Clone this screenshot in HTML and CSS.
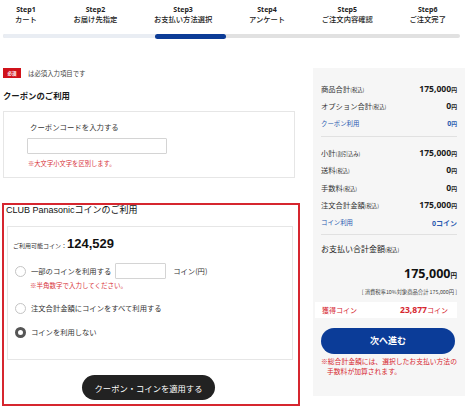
FILE: index.html
```html
<!DOCTYPE html>
<html lang="ja">
<head>
<meta charset="utf-8">
<title>お支払い方法選択</title>
<link rel="stylesheet" href="styles.css">
</head>
<body>
<header class="steps">
  <ol class="step-list">
    <li class="step"><span class="step-no">Step1</span><span class="step-name">カート</span></li>
    <li class="step"><span class="step-no">Step2</span><span class="step-name">お届け先指定</span></li>
    <li class="step"><span class="step-no">Step3</span><span class="step-name">お支払い方法選択</span></li>
    <li class="step"><span class="step-no">Step4</span><span class="step-name">アンケート</span></li>
    <li class="step"><span class="step-no">Step5</span><span class="step-name">ご注文内容確認</span></li>
    <li class="step"><span class="step-no">Step6</span><span class="step-name">ご注文完了</span></li>
  </ol>
  <div class="progress"><span class="progress-done"></span><span class="progress-current"></span></div>
</header>

<main class="checkout">
  <section class="options">
    <p class="required-note"><span class="badge">必須</span>は必須入力項目です</p>

    <h2 class="section-title">クーポンのご利用</h2>
    <div class="box coupon-box">
      <label class="field-label" for="coupon">クーポンコードを入力する</label>
      <input class="text-input coupon-input" id="coupon" type="text">
      <p class="hint">※大文字小文字を区別します。</p>
    </div>

    <div class="coin-section">
      <h2 class="coin-title">CLUB Panasonicコインのご利用</h2>
      <div class="box coin-box">
        <p class="coin-available">ご利用可能コイン：<strong class="coin-amount">124,529</strong></p>
        <div class="radio-row">
          <span class="radio"></span>
          <span>一部のコインを利用する</span>
          <input class="text-input coin-input" type="text">
          <span>コイン(円)</span>
        </div>
        <p class="hint coin-hint">※半角数字で入力してください。</p>
        <div class="radio-row row-all">
          <span class="radio"></span>
          <span>注文合計金額にコインをすべて利用する</span>
        </div>
        <div class="radio-row row-none">
          <span class="radio is-checked"></span>
          <span>コインを利用しない</span>
        </div>
      </div>
      <div class="apply-wrap">
        <button class="btn-apply" type="button">クーポン・コインを適用する</button>
      </div>
    </div>
  </section>

  <aside class="summary">
    <div class="sum-group">
      <div class="sum-row"><span class="sum-label">商品合計<small>(税込)</small></span><span class="sum-value">175,000<small>円</small></span></div>
      <div class="sum-row"><span class="sum-label">オプション合計<small>(税込)</small></span><span class="sum-value">0<small>円</small></span></div>
      <div class="sum-row is-blue"><span class="sum-label">クーポン利用</span><span class="sum-value">0<small>円</small></span></div>
    </div>
    <div class="sum-group second">
      <div class="sum-row"><span class="sum-label">小計<small>(割引込み)</small></span><span class="sum-value">175,000<small>円</small></span></div>
      <div class="sum-row"><span class="sum-label">送料<small>(税込)</small></span><span class="sum-value">0<small>円</small></span></div>
      <div class="sum-row"><span class="sum-label">手数料<small>(税込)</small></span><span class="sum-value">0<small>円</small></span></div>
      <div class="sum-row"><span class="sum-label">注文合計金額<small>(税込)</small></span><span class="sum-value">175,000<small>円</small></span></div>
      <div class="sum-row is-blue"><span class="sum-label">コイン利用</span><span class="sum-value">0コイン</span></div>
    </div>
    <p class="total-label">お支払い合計金額<small>(税込)</small></p>
    <p class="total-value">175,000<small>円</small></p>
    <p class="tax-note">[ 消費税率10%対象商品合計 175,000円 ]</p>
    <div class="earn-row"><span>獲得コイン</span><span class="earn-value"><strong>23,877</strong>コイン</span></div>
    <button class="btn-next" type="button">次へ進む</button>
    <p class="fee-note">※総合計金額には、選択したお支払い方法の<br><span class="indent">手数料が加算されます。</span></p>
  </aside>
</main>
</body>
</html>
```

FILE: styles.css
```css
* { box-sizing: border-box; }

body {
  margin: 0;
  font-family: "Noto Sans CJK JP", "Noto Sans", sans-serif;
  color: #2a2a2a;
  background: #fff;
}

p, h2 { margin: 0; }

/* ---- step indicator ---- */
.steps { padding-top: 5px; }

.step-list {
  list-style: none;
  margin: 0;
  padding: 0 28px 0 15px;
  display: flex;
  justify-content: space-between;
}

.step {
  display: flex;
  flex-direction: column;
  align-items: center;
}

.step-no {
  font: 700 7px/9px "Noto Sans", sans-serif;
  color: #222;
}

.step-name {
  font-size: 7.3px;
  line-height: 10px;
  font-weight: 500;
  color: #222;
}

.progress {
  display: flex;
  margin: 10px 14px 0 3px;
  height: 4px;
  border-radius: 2px;
  background: #e1e1e1;
}

.progress-done {
  width: 152px;
  background: #e9edf3;
  border-radius: 2px 0 0 2px;
}

.progress-current {
  width: 71px;
  height: 5px;
  margin-top: -0.5px;
  background: #0c3c97;
  border-radius: 3px;
}

/* ---- main layout ---- */
.checkout {
  display: flex;
  align-items: flex-start;
  margin-top: 30px;
  padding-left: 2px;
}

.options { width: 298px; }

.required-note {
  display: flex;
  align-items: center;
  height: 10px;
  margin-left: 1px;
  font-size: 6.4px;
  color: #444;
}

.badge {
  display: inline-flex;
  align-items: center;
  justify-content: center;
  width: 18px;
  height: 10px;
  margin-right: 7px;
  background: #d0121b;
  color: #fff;
  font-size: 4.5px;
  font-weight: 700;
}

.section-title {
  margin: 11px 0 0 1px;
  font-size: 8.4px;
  line-height: 12px;
  font-weight: 700;
  color: #1a1a1a;
}

.box {
  border: 1px solid #e6e6e6;
  background: #fff;
}

.coupon-box {
  margin: 10px 5px 0 1px;
  padding: 10px 0 9px 24px;
}

.field-label {
  display: block;
  padding-left: 2px;
  font-size: 7.4px;
  line-height: 10px;
  color: #333;
}

.text-input {
  display: block;
  height: 16px;
  border: 1px solid #d4d4d4;
  border-radius: 1px;
  background: #fff;
  padding: 0;
  margin: 0;
}

.coupon-input {
  width: 140px;
  margin: 6px 0 0 -1px;
}

.hint {
  margin-top: 5px;
  font-size: 6.3px;
  line-height: 9px;
  color: #d8333a;
}

/* ---- coin block ---- */
.coin-section {
  margin-top: 25px;
  border: 2px solid #d6262f;
  padding: 0 0 4px 2px;
}

.coin-title {
  font: 400 9px/11px "Liberation Sans", "Noto Sans CJK JP", sans-serif;
  color: #111;
}

.coin-box {
  margin: 10px 5px 0 1px;
  padding: 9px 0 20px 5px;
}

.coin-available {
  display: flex;
  align-items: baseline;
  font-size: 6px;
  line-height: 16px;
  color: #333;
}

.coin-amount {
  font: 700 13px/16px "Liberation Sans", sans-serif;
  color: #111;
}

.radio-row {
  display: flex;
  align-items: center;
  gap: 5px;
  margin-top: 9px;
  padding-left: 2px;
  font-size: 7.3px;
  line-height: 14px;
  color: #333;
}

.row-all { margin-top: 11px; }
.row-none { margin-top: 10px; }

.radio {
  width: 11px;
  height: 11px;
  border: 1px solid #c4c4c4;
  border-radius: 50%;
  background: #fff;
  flex: none;
}

.radio.is-checked {
  border: 3.5px solid #555;
}

.coin-input {
  width: 51px;
  margin: 0 2px 0 -1px;
}

.coin-hint {
  margin-top: 2px;
  padding-left: 17px;
  font-size: 6.5px;
}

.apply-wrap {
  display: flex;
  justify-content: center;
  margin-top: 15px;
}

.btn-apply {
  width: 133px;
  height: 25px;
  border: 0;
  border-radius: 13px;
  background: #222;
  color: #fff;
  font-family: inherit;
  font-size: 8.3px;
  margin-right: 7px;
}

/* ---- order summary ---- */
.summary {
  width: 152px;
  margin-left: 13px;
  padding: 12px 8px 20px;
  background: #f6f6f6;
}

.sum-group {
  padding-bottom: 3px;
  border-bottom: 1px solid #e1e1e1;
}

.sum-group.second { padding-top: 7px; padding-bottom: 2px; }

.sum-row {
  display: flex;
  justify-content: space-between;
  align-items: center;
  height: 17.6px;
}

.sum-label {
  font-size: 7.3px;
  color: #333;
}

.sum-label small,
.total-label small {
  font-size: 5.3px;
}

.sum-value {
  font: 700 8.6px "Noto Sans", "Noto Sans CJK JP", sans-serif;
  color: #1a1a1a;
}

.sum-value small {
  font-size: 5.8px;
  font-family: "Noto Sans CJK JP", sans-serif;
}

.is-blue .sum-label { color: #2b5ab0; font-size: 6.4px; }
.is-blue .sum-value { color: #2b5ab0; font-size: 7px; }

.total-label {
  margin-top: 8px;
  font-size: 8px;
  line-height: 12px;
  color: #222;
}

.total-value {
  margin-top: 10px;
  text-align: right;
  font: 700 12.5px/16px "Noto Sans", "Noto Sans CJK JP", sans-serif;
  color: #111;
}

.total-value small {
  font-size: 6.5px;
  font-family: "Noto Sans CJK JP", sans-serif;
}

.tax-note {
  margin-top: 5px;
  text-align: right;
  font-size: 5.3px;
  line-height: 8px;
  color: #444;
}

.earn-row {
  display: flex;
  justify-content: space-between;
  align-items: center;
  height: 16px;
  margin: 6px 0 0 -6px;
  padding: 0 9px 0 7px;
  background: #fff;
  font-size: 7px;
  color: #d6262f;
}

.earn-value strong {
  font: 700 8.6px "Noto Sans", sans-serif;
}

.btn-next {
  display: block;
  width: 134px;
  height: 26px;
  margin-top: 10px;
  border: 0;
  border-radius: 13px;
  background: #0b3c98;
  color: #fff;
  font-family: inherit;
  font-size: 9px;
  font-weight: 700;
}

.fee-note {
  margin-top: 2px;
  font-size: 6.8px;
  line-height: 10px;
  color: #d6262f;
}

.fee-note .indent { padding-left: 6px; }
```
